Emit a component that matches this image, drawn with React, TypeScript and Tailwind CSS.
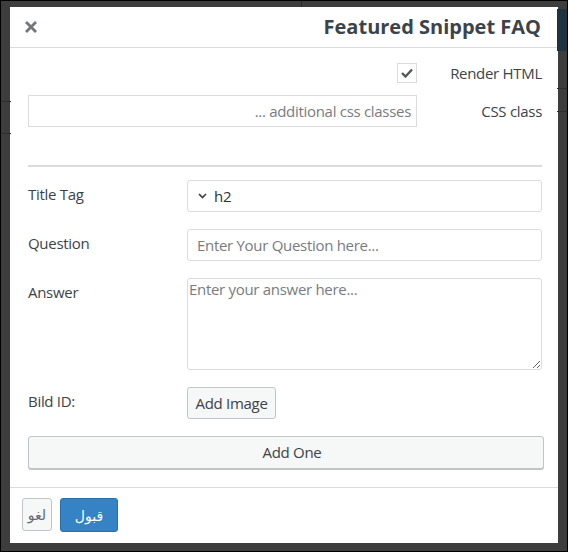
const font = { fontFamily: '"Open Sans", "DejaVu Sans", sans-serif' };

const FieldRow = ({ label, children }: { label: string; children: React.ReactNode }) => (
  <div className="flex items-start">
    <div className="w-[159px] shrink-0 pt-[4px] text-[15px] leading-[20px] tracking-[-0.3px] text-[#3c434a]">{label}</div>
    <div className="flex-1">{children}</div>
  </div>
);

export default function App() {
  return (
    <div className="relative h-[552px] w-[568px] overflow-hidden border border-black bg-[#3d3d3d]" style={font}>
      {/* page behind the overlay */}
      <div className="absolute left-[300px] top-0 h-[6px] w-[200px] border-l border-[#2a2a2a]" />
      <div className="absolute right-0 top-[8px] h-[42px] w-[10px] bg-[#1f3340]" />
      <div className="absolute left-0 top-[100px] h-px w-[10px] bg-[#2e2e2e]" />
      <div className="absolute left-0 top-[132px] h-px w-[10px] bg-[#2e2e2e]" />
      <div className="absolute right-0 top-[87px] h-px w-[10px] bg-[#2e2e2e]" />
      <div className="absolute right-0 top-[110px] h-px w-[10px] bg-[#2e2e2e]" />

      <div className="ml-[9px] mt-[6px] flex h-[536px] w-[548px] flex-col bg-white">
        {/* header */}
        <div className="flex h-[41px] shrink-0 items-center justify-between border-b border-[#dcdcde] pl-[15px] pr-[17px]">
          <svg width="12" height="12" viewBox="0 0 12 12">
            <path d="M2 2 L10 10 M10 2 L2 10" stroke="#72777c" strokeWidth="2.8" strokeLinecap="square" />
          </svg>
          <div className="text-[20px] font-bold leading-none text-[#3c434a]">Featured Snippet FAQ</div>
        </div>

        {/* body */}
        <div className="flex flex-1 flex-col pl-[18px] pr-[16px] text-[15px] tracking-[-0.3px]">
          <div className="mt-[15px] flex items-center">
            <div className="flex flex-1 justify-end">
              <div className="flex h-[20px] w-[20px] items-center justify-center border border-[#dcdcde]">
                <svg width="12" height="10" viewBox="0 0 12 10">
                  <path d="M1 5 L4.5 8.5 L11 1.5" fill="none" stroke="#50575e" strokeWidth="2.4" />
                </svg>
              </div>
            </div>
            <div className="w-[125px] text-right leading-[20px] text-[#3c434a]">Render HTML</div>
          </div>

          <div className="mt-[12px] flex items-center">
            <div className="flex flex-1 justify-end">
              <div className="flex h-[32px] w-full items-center justify-end border border-[#dcdcde] px-[5px] text-[#787c82]">
                ... additional css classes
              </div>
            </div>
            <div className="w-[125px] text-right leading-[20px] text-[#3c434a]">CSS class</div>
          </div>

          <div className="mt-[38px] h-[2px] bg-[#dcdcde]" />

          <div className="mt-[13px] flex flex-col gap-[17px]">
            <FieldRow label="Title Tag">
              <div className="flex h-[32px] items-center gap-[7px] rounded-[3px] border border-[#dcdcde] pl-[10px] text-[#2c3338]">
                <svg width="9" height="6" viewBox="0 0 9 6">
                  <path d="M1 1 L4.5 4.5 L8 1" fill="none" stroke="#3c434a" strokeWidth="1.7" />
                </svg>
                h2
              </div>
            </FieldRow>
            <FieldRow label="Question">
              <div className="flex h-[32px] items-center rounded-[3px] border border-[#dcdcde] pl-[9px] text-[#787c82]">
                Enter Your Question here...
              </div>
            </FieldRow>
            <FieldRow label="Answer">
              <textarea
                readOnly
                placeholder="Enter your answer here..."
                className="block h-[92px] w-full rounded-[3px] border border-[#dcdcde] px-[1px] py-0 text-[15px] leading-[20px] tracking-[-0.3px] text-[#787c82] placeholder:text-[#787c82]"
                style={font}
              />
            </FieldRow>
            <FieldRow label="Bild ID:">
              <div className="flex h-[32px] w-[89px] items-center justify-center rounded-[3px] border border-[#c3c4c7] bg-[#f6f7f7] text-[#3c434a]">
                Add Image
              </div>
            </FieldRow>
          </div>

          <div className="mt-[17px] flex h-[33px] w-[516px] items-center justify-center rounded-[3px] border border-[#c3c4c7] bg-[#f6f7f7] pl-[12px] text-[#3c434a] shadow-[0_1px_0_#c3c4c7]">
            Add One
          </div>
        </div>

        {/* footer */}
        <div className="flex h-[56px] shrink-0 items-start gap-[8px] border-t border-[#dcdcde] pl-[12px] pt-[10px]">
          <div className="flex h-[33px] w-[30px] items-center justify-center rounded-[3px] border border-[#c3c4c7] bg-[#f6f7f7] text-[14px] text-[#646970]">
            لغو
          </div>
          <div className="flex h-[34px] w-[58px] items-center justify-center rounded-[3px] border border-[#2271b1] bg-[#3582c4] text-[14px] text-white">
            قبول
          </div>
        </div>
      </div>
    </div>
  );
}
